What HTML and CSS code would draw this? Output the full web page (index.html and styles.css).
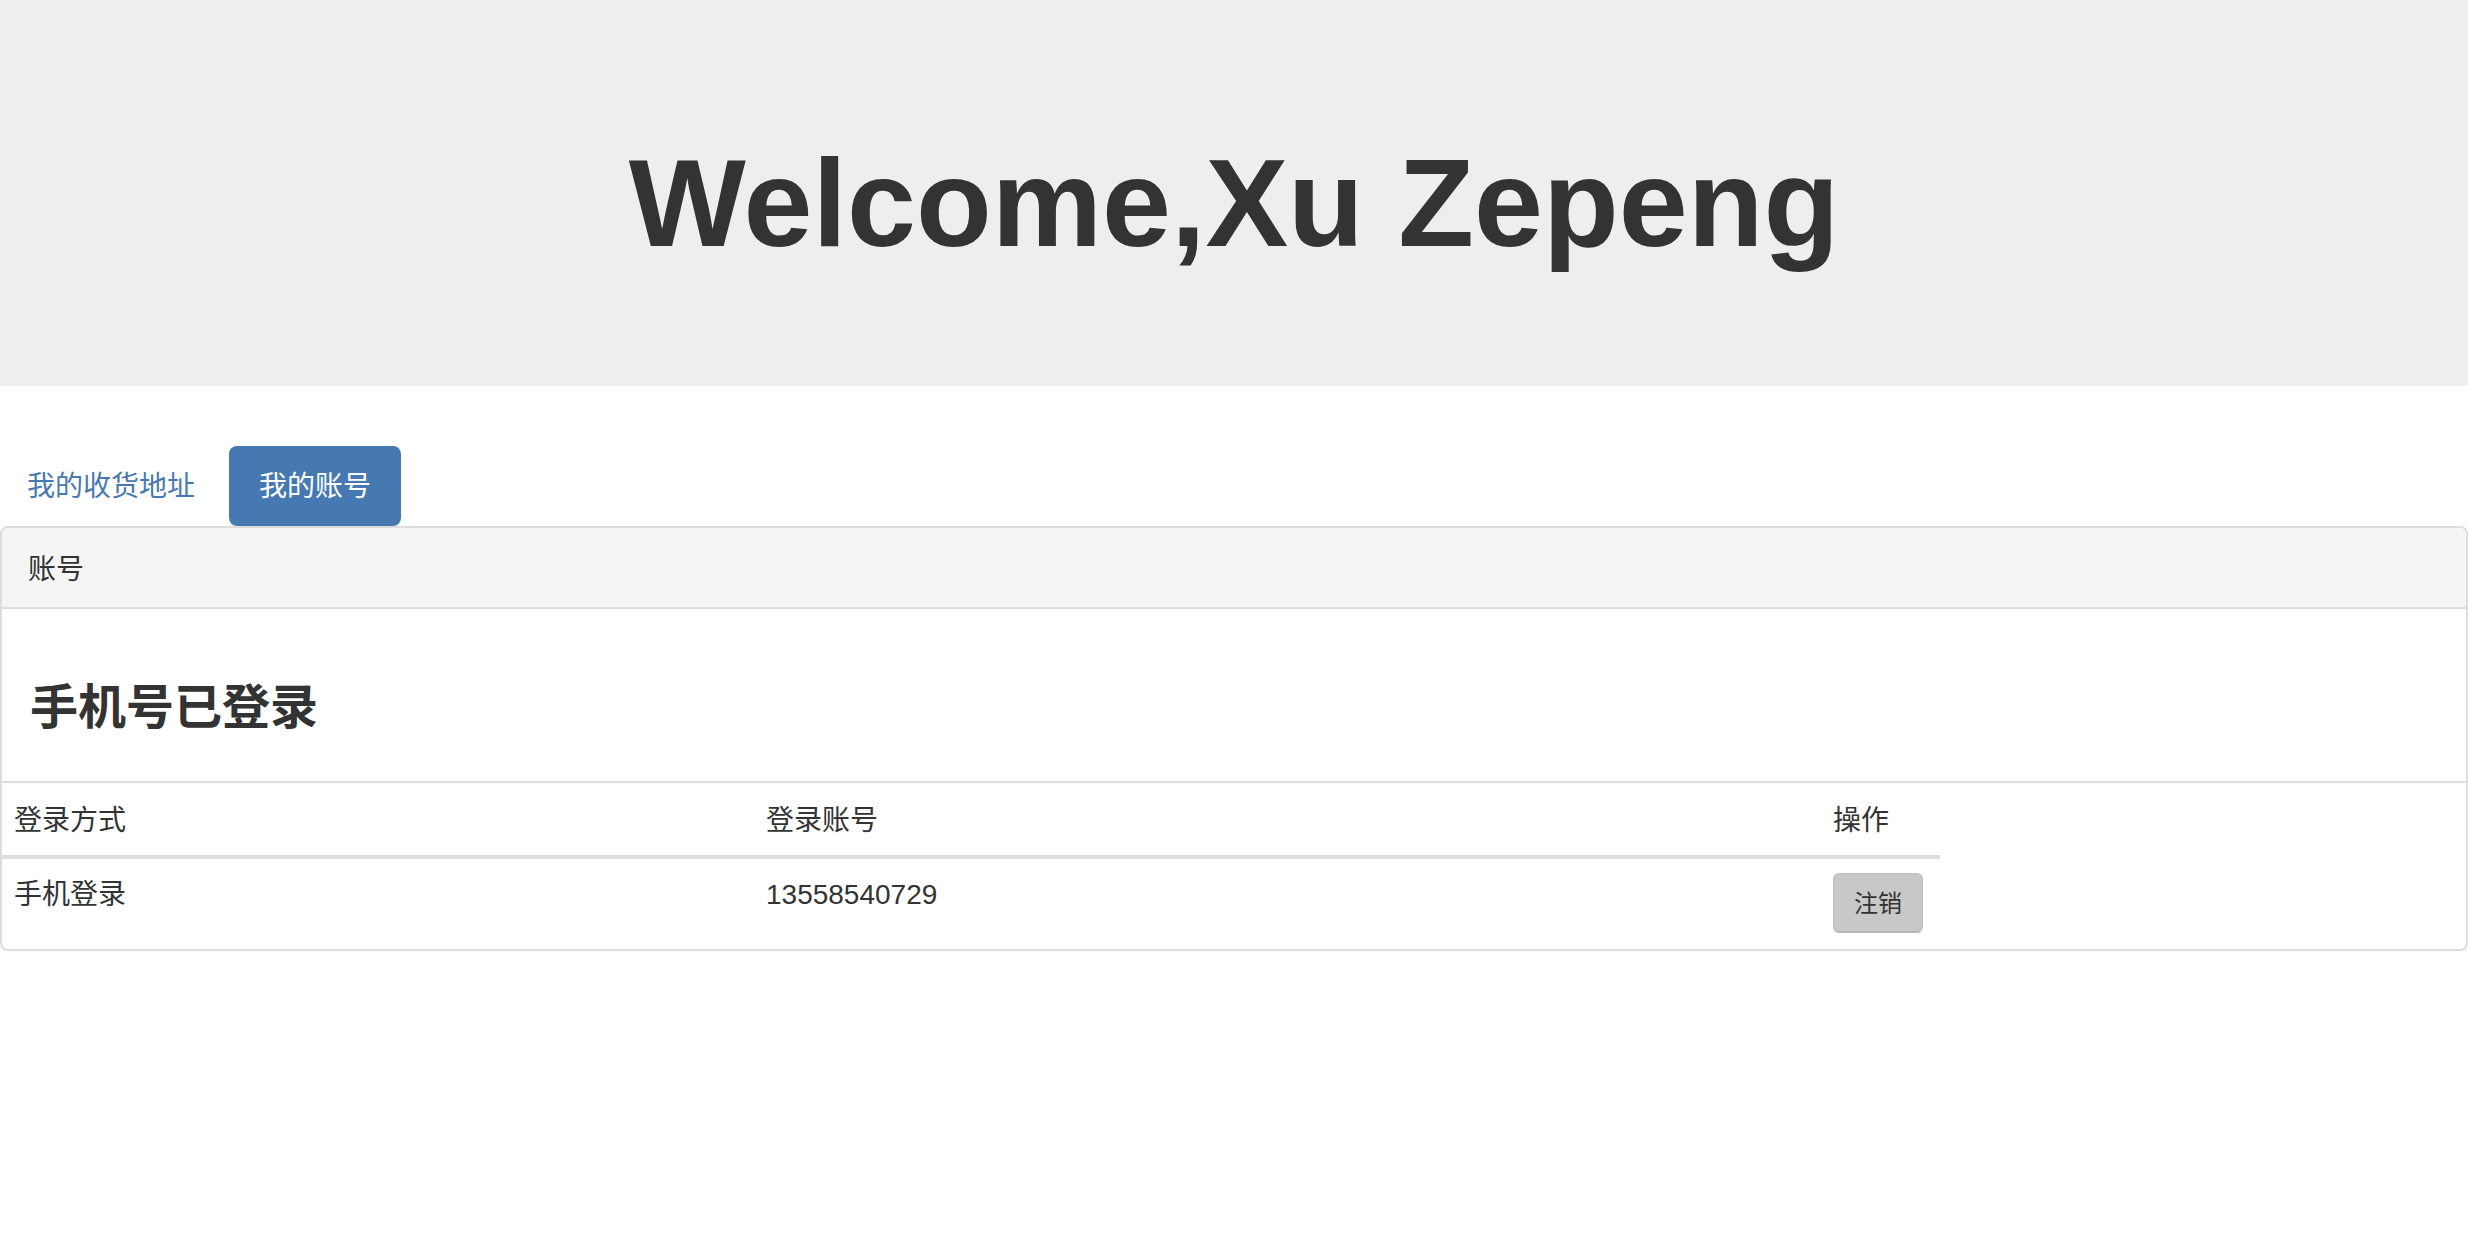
FILE: index.html
```html
<!DOCTYPE html>
<html lang="zh-CN">
<head>
<meta charset="utf-8">
<title>我的账号</title>
<link rel="stylesheet" href="styles.css">
</head>
<body>
<div class="jumbotron">
  <h1 class="welcome">Welcome,Xu Zepeng</h1>
</div>
<ul class="tabs">
  <li class="tab"><a href="#">我的收货地址</a></li>
  <li class="tab active"><a href="#">我的账号</a></li>
</ul>
<div class="panel">
  <div class="panel-heading">账号</div>
  <div class="panel-body">
    <h3 class="status">手机号已登录</h3>
  </div>
  <div class="table-wrap">
    <table class="accounts">
      <thead>
        <tr>
          <th class="c1">登录方式</th>
          <th class="c2">登录账号</th>
          <th class="c3">操作</th>
        </tr>
      </thead>
      <tbody>
        <tr>
          <td class="c1"><span class="cell-text">手机登录</span></td>
          <td class="c2"><span class="cell-text">13558540729</span></td>
          <td class="c3"><button class="btn">注销</button></td>
        </tr>
      </tbody>
    </table>
  </div>
</div>
</body>
</html>
```
FILE: styles.css
```css
* { box-sizing: border-box; }
html, body { margin: 0; padding: 0; background: #fff; }
body {
  font-family: "Liberation Sans", "Noto Sans CJK SC", sans-serif;
  font-size: 28px;
  line-height: 40px;
  color: #333;
}
.jumbotron {
  background: #eee;
  padding: 134px 0 113px;
  text-align: center;
}
.welcome {
  margin: 0;
  font-size: 124px;
  line-height: 138.6px;
  font-weight: 700;
  color: #333;
}
.tabs {
  list-style: none;
  margin: 60px 0 0 -3px;
  padding: 0;
  display: flex;
  gap: 4px;
}
.tab a {
  display: block;
  padding: 21px 30px 19px;
  border-radius: 8px;
  color: #4679b2;
  text-decoration: none;
  font-size: 28px;
  line-height: 40px;
}
.tab.active a {
  background: #4679b2;
  color: #fff;
}
.panel {
  border: 2px solid #ddd;
  border-radius: 8px;
  box-shadow: 0 1px 2px rgba(0,0,0,0.05);
}
.panel-heading {
  background: #f5f5f5;
  border-bottom: 2px solid #ddd;
  border-radius: 6px 6px 0 0;
  padding: 22px 26px 17px;
  line-height: 40px;
}
.panel-body {
  padding: 30px 28px;
}
.status {
  margin: 43px 0 17px;
  font-size: 48px;
  line-height: 52.8px;
  font-weight: 700;
  color: #333;
}
.table-wrap {
  border-top: 2px solid #ddd;
}
.accounts {
  border-collapse: collapse;
  border-spacing: 0;
  width: 1938px;
  table-layout: fixed;
}
.accounts th, .accounts td {
  text-align: left;
  font-weight: normal;
  vertical-align: top;
  line-height: 40px;
  padding: 16px;
}
.accounts th {
  border-bottom: 4px solid #ddd;
  padding-top: 18px;
  padding-bottom: 14px;
}
.accounts td {
  padding-top: 14px;
}
.cell-text {
  display: block;
  padding-top: 2px;
}
.accounts .c1 { width: 748px; padding-left: 12px; }
.accounts .c2 { width: 1067px; }
.accounts .c3 { width: 123px; }
.btn {
  display: block;
  font-family: "Liberation Sans", "Noto Sans CJK SC", sans-serif;
  font-size: 24px;
  line-height: 36px;
  padding: 11px 19px 9px;
  color: #333;
  background: #c9c8c9;
  border: 2px solid #c4c3c4;
  border-bottom-color: #b8b7b8;
  border-radius: 6px;
}
```
